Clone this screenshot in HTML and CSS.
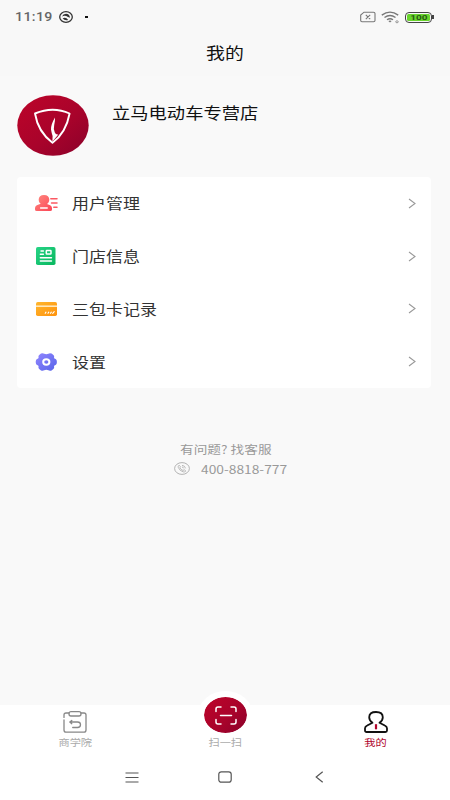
FILE: index.html
```html
<!DOCTYPE html>
<html lang="zh-CN">
<head>
<meta charset="utf-8">
<title>我的</title>
<link rel="stylesheet" href="styles.css">
</head>
<body>
<header class="status">
  <span class="clock"><span class="wide">11:19</span></span>
  <svg class="status-app" width="14" height="12" viewBox="0 0 14 12"><ellipse cx="7" cy="6" rx="6.3" ry="5.3" fill="none" stroke="#333" stroke-width="1.3"/><path d="M3 5.5Q4 2.8 7 2.8Q10.5 3 11 6.8L9 6Q6 4 3 5.5ZM3.6 7.2Q7 5.6 9.2 8.9Q5.5 10 3.6 7.2Z" fill="#333"/></svg>
  <i class="dot"></i>
  <div class="signals">
    <svg width="16" height="12" viewBox="0 0 16 12" fill="none" stroke="#777" stroke-width="1.1"><path d="M4 1.2H13.5Q15 1.2 15 2.5V9.5Q15 10.7 13.5 10.7H2Q.7 10.7.7 9.5V4ZM5.8 3.8L10.2 8.2M10.2 3.8L5.8 8.2"/></svg>
    <svg class="wifi" width="19" height="13" viewBox="0 0 19 13" fill="none" stroke="#777" stroke-width="1.4"><path d="M.8 4.1Q9 -1.9 17.2 4.1M3.5 6.5Q9 2.5 14.5 6.5M6 8.8Q9 6.7 12 8.8"/><path d="M7.3 10L9 11.4L10.7 10Q9 9 7.3 10Z" fill="#777" stroke="none"/><ellipse cx="16" cy="10.8" rx="1.3" ry="1" stroke-width=".7"/></svg>
    <div class="battery"><b><span class="level">100</span></b></div>
  </div>
</header>
<h1 class="title"><span class="wide">我的</span></h1>
<section class="profile">
  <svg class="avatar" width="72" height="61" viewBox="0 0 72 61">
    <defs><linearGradient id="red" x1="0" y1="0" x2="1" y2="1"><stop offset="0" stop-color="#bd0429"/><stop offset=".55" stop-color="#a9032b"/><stop offset="1" stop-color="#8a012a"/></linearGradient></defs>
    <ellipse cx="36" cy="30.5" rx="35.7" ry="30.3" fill="url(#red)"/>
    <path d="M18 18.5Q36 11 52.6 18.5Q49 38 35.5 47.7Q21 37 18 18.5Z" fill="none" stroke="#fff" stroke-width="1.9" stroke-linejoin="round"/>
    <path d="M38 22.5Q33.8 29.5 34 34.5Q34.6 38 35.6 41L35.4 46.5L41.3 39.5Q38.8 40 37.8 37.5Q36.2 34 37.2 30Q38.2 26 38 22.5Z" fill="#fff"/>
  </svg>
  <div class="shop"><span class="wide">立马电动车专营店</span></div>
</section>
<nav class="card">
  <div class="row">
    <svg class="icon" width="23" height="18" viewBox="0 0 23 18"><defs><linearGradient id="pink" x1="0" y1="0" x2="1" y2="1"><stop stop-color="#ff8a80"/><stop offset="1" stop-color="#fb4556"/></linearGradient></defs><path d="M9 1C12.4 1 14.3 3 14.3 5.5C14.3 7.7 13.3 9 12 10L15.2 11.3Q17 12.2 17 14V15.5Q17 17 15.2 17H1.8Q0 17 0 15.5V14Q0 12.2 1.8 11.3L5.7 9.8C4.5 9 3.7 7.6 3.7 5.5C3.7 3 5.6 1 9 1Z" fill="url(#pink)"/><path d="M5.6 14H12.2" stroke="#fff" stroke-width="1.5" stroke-linecap="round"/><path d="M15.8 4.7H22M16.5 9H22M18.8 13.2H22" stroke="#fb5963" stroke-width="1.5" stroke-linecap="round"/></svg>
    <span class="label"><span class="wide">用户管理</span></span>
    <svg class="chevron" width="8" height="11" viewBox="0 0 8 11"><path d="M1 1L7 5.5L1 10"/></svg>
  </div>
  <div class="row">
    <svg class="icon" width="23" height="18" viewBox="0 0 23 18"><defs><linearGradient id="green" x1="0" y1="0" x2="1" y2="1"><stop stop-color="#27d486"/><stop offset="1" stop-color="#08b65e"/></linearGradient></defs><rect x="1" width="19.5" height="18" rx="1.8" fill="url(#green)"/><path d="M6 4H8.4M5.3 7.3H8.4M5.3 10.7H16.5M5.3 14H16.5" stroke="#fff" stroke-width="1.4" stroke-linecap="round"/><rect x="11.3" y="3.6" width="4.7" height="3.5" rx=".6" stroke="#fff" stroke-width="1.5" fill="none"/></svg>
    <span class="label"><span class="wide">门店信息</span></span>
    <svg class="chevron" width="8" height="11" viewBox="0 0 8 11"><path d="M1 1L7 5.5L1 10"/></svg>
  </div>
  <div class="row">
    <svg class="icon" width="23" height="18" viewBox="0 0 23 18"><defs><linearGradient id="orange" x1="0" y1="0" x2="1" y2="1"><stop stop-color="#ffb62e"/><stop offset="1" stop-color="#ff920c"/></linearGradient></defs><rect x="1" y="2" width="21" height="14" rx="1.7" fill="url(#orange)"/><path d="M1 6.2H22" stroke="#ffe8bd" stroke-width="1.6"/><path d="M10.2 13.3L11 12.1M13 13.3L13.8 12.1M15.5 13.3L16.3 12.1M17.7 13.3L19.2 11.7" stroke="#fff" stroke-width="1.1" stroke-linecap="round"/></svg>
    <span class="label"><span class="wide">三包卡记录</span></span>
    <svg class="chevron" width="8" height="11" viewBox="0 0 8 11"><path d="M1 1L7 5.5L1 10"/></svg>
  </div>
  <div class="row">
    <svg class="icon" width="23" height="18" viewBox="0 0 23 18"><defs><linearGradient id="violet" x1="0" y1="0" x2="1" y2="1"><stop stop-color="#9186ff"/><stop offset="1" stop-color="#5663e8"/></linearGradient></defs><path d="M6 .6Q7.8 -.2 9.2.7Q11.3 1.6 13.4.7Q14.8 -.2 16.6.6L18.4 2Q19.5 3 19 4.4Q19 5.6 20.6 6Q21.9 6.6 21.9 9Q21.9 11.4 20.6 12Q19 12.4 19 13.6Q19.5 15 18.4 16L16.6 17.4Q14.8 18.2 13.4 17.3Q11.3 16.4 9.2 17.3Q7.8 18.2 6 17.4L4.2 16Q3.1 15 3.6 13.6Q3.6 12.4 2 12Q.7 11.4.7 9Q.7 6.6 2 6Q3.6 5.6 3.6 4.4Q3.1 3 4.2 2Z" fill="url(#violet)"/><ellipse cx="11.3" cy="9" rx="3.1" ry="2.7" fill="none" stroke="#fff" stroke-width="2"/></svg>
    <span class="label"><span class="wide">设置</span></span>
    <svg class="chevron" width="8" height="11" viewBox="0 0 8 11"><path d="M1 1L7 5.5L1 10"/></svg>
  </div>
</nav>
<section class="help">
  <p class="ask"><span class="wide">有问题? 找客服</span></p>
  <p class="phone"><svg width="16" height="13" viewBox="0 0 16 13" fill="none" stroke="#aaa"><ellipse cx="8" cy="6.5" rx="7.4" ry="5.9" stroke-width=".9"/><path d="M5.1 3.2L6.6 4.8L5.8 5.8Q7 7.6 9 8.5L10.2 7.7L11.8 9Q10.8 10.3 9.2 9.9Q5.5 8.7 4.3 5.5Q3.8 4 5.1 3.2ZM8 3.3Q11 3.7 11.5 6.3M8 5Q9.5 5.2 9.8 6.4" stroke-width=".8"/></svg><span class="number"><span class="wide">400-8818-777</span></span></p>
</section>
<footer class="bottom">
  <div class="tabs">
    <div class="tab">
      <svg width="24" height="22" viewBox="0 0 24 22" fill="none" stroke="#888" stroke-width="1.3" stroke-linecap="round" stroke-linejoin="round"><path d="M6 2H3Q1 2 1 4V6.4M1 9V19Q1 21.2 3.2 21.2H20.8Q23 21.2 23 19V4Q23 2 21 2H18"/><rect x="6" y=".7" width="12" height="4.3" rx="2"/><path d="M8.8 9.4L6.8 11L8.8 12.7M7 11H14.5Q17.5 11 17.5 13.7Q17.5 16.5 14.5 16.5H9.7"/></svg>
      <span class="caption"><span class="wide">商学院</span></span>
    </div>
    <div class="tab scan">
      <div class="scan-button"><svg width="22" height="19" viewBox="0 0 22 19" fill="none" stroke="#fff" stroke-width="1.5" stroke-linecap="round"><path d="M1 5.5V3Q1 1 3 1H6M16 1H19Q21 1 21 3V5.5M21 13.5V16Q21 18 19 18H16M6 18H3Q1 18 1 16V13.5M5.5 9.5H16.5"/></svg></div>
      <span class="caption"><span class="wide">扫一扫</span></span>
    </div>
    <div class="tab active">
      <svg width="24" height="22" viewBox="0 0 24 22" fill="none" stroke="#111" stroke-width="1.8" stroke-linejoin="round"><path d="M8.5 11.8Q5.2 9.5 5.2 6.2Q5.2 1 12 1Q18.8 1 18.8 6.2Q18.8 9.5 15.5 11.8L20.8 14.5Q23 15.5 23 17.3V19.5Q23 21 21.4 21H2.6Q1 21 1 19.5V17.3Q1 15.5 3.2 14.5Z"/><path d="M12 13.2V18.3" stroke="#b0042b" stroke-width="2.2"/></svg>
      <span class="caption"><span class="wide">我的</span></span>
    </div>
  </div>
  <div class="system">
    <svg width="14" height="11" viewBox="0 0 14 11"><path d="M.5 1H13.5M.5 5.5H13.5M.5 10H13.5"/></svg>
    <svg class="home" width="14" height="12" viewBox="0 0 14 12"><rect x=".8" y=".8" width="12.4" height="10.4" rx="2.5"/></svg>
    <svg width="9" height="12" viewBox="0 0 9 12"><path d="M7.7.7L1.2 6L7.7 11.3"/></svg>
  </div>
</footer>
</body>
</html>
```
FILE: styles.css
```css
* { box-sizing: border-box; }
body {
  margin: 0;
  width: 450px;
  height: 800px;
  display: flex;
  flex-direction: column;
  overflow: hidden;
  background: #f9f9f9;
  font-family: "Noto Sans CJK SC", sans-serif;
  color: #333;
}
svg { display: block; flex: none; }
.wide {
  display: inline-block;
  white-space: nowrap;
  transform: scaleX(1.18);
  transform-origin: left center;
}
.status {
  height: 34px;
  padding: 0 18px 0 15px;
  display: flex;
  align-items: center;
  background: #f8f8f8;
}
.clock {
  width: 44px;
  font: 500 12px/34px Roboto, sans-serif;
  letter-spacing: .3px;
  color: #666;
}
.dot { width: 3px; height: 2px; margin-left: 12px; background: #111; }
.signals { margin-left: auto; display: flex; align-items: center; }
.wifi { margin: 0 5px 0 5px; }
.battery {
  width: 27px;
  height: 11px;
  padding: 1px;
  border: 1.5px solid #444;
  border-radius: 4px;
  position: relative;
}
.battery::after {
  content: "";
  position: absolute;
  right: -3px;
  top: 2px;
  width: 2px;
  height: 4px;
  background: #444;
}
.battery b {
  display: block;
  height: 7px;
  border-radius: 1.5px;
  background: #69d52d;
  font: 700 8px/7px Roboto, sans-serif;
  text-align: center;
  color: #285a14;
}
.level { display: inline-block; transform: scaleX(1.25); }
.title {
  height: 42px;
  margin: 0;
  font-size: 16px;
  font-weight: 400;
  line-height: 36px;
  text-align: center;
  color: #111;
  background: #f8f8f8;
}
.title .wide, .caption .wide { transform-origin: center; }
.profile {
  height: 101px;
  padding: 19px 0 0 17px;
  display: flex;
  align-items: flex-start;
}
.shop {
  margin: 6px 0 0 23px;
  font-size: 15.5px;
  line-height: 22px;
  color: #111;
}
.card {
  width: 414px;
  height: 211px;
  margin-left: 17px;
  display: flex;
  flex-direction: column;
  border-radius: 4px;
  background: #fff;
}
.row {
  flex: 1;
  padding: 0 15px 0 18px;
  display: flex;
  align-items: center;
}
.label { margin-left: 13.5px; font-size: 14.4px; line-height: 22px; }
.chevron { margin-left: auto; fill: none; stroke: #999; stroke-width: 1.1; }
.help { margin-top: 52px; color: #999; }
.help p { margin: 0; height: 19px; line-height: 19px; }
.ask { padding-left: 179.5px; font-size: 11.6px; }
.phone {
  padding-left: 174px;
  display: flex;
  align-items: center;
  font-size: 11.7px;
}
.number { margin-left: 11px; }
.bottom {
  height: 95px;
  margin-top: auto;
  display: flex;
  flex-direction: column;
  background: #fff;
}
.tabs { height: 48px; display: grid; grid-template-columns: repeat(3, 1fr); }
.tab {
  padding-top: 6px;
  display: flex;
  flex-direction: column;
  align-items: center;
}
.caption { margin-top: 2px; font-size: 9.5px; line-height: 14px; color: #aaa; }
.active { padding-left: 1px; }
.active .caption { color: #b0042b; }
.scan { padding-top: 0; }
.scan-button {
  width: 55px;
  height: 48px;
  margin-top: -14px;
  margin-left: 1px;
  flex: none;
  display: grid;
  place-items: center;
  border: 6px solid #fff;
  border-radius: 50%;
  background: linear-gradient(135deg, #bd0429, #a9032b 55%, #8a012a) padding-box;
}
.scan .caption { margin-top: -4px; }
.system {
  flex: 1;
  padding: 1px 126px 0 125px;
  display: flex;
  align-items: center;
  justify-content: space-between;
}
.system svg { fill: none; stroke: #555; stroke-width: 1.2; }
.system .home { margin-right: 5px; }
```
